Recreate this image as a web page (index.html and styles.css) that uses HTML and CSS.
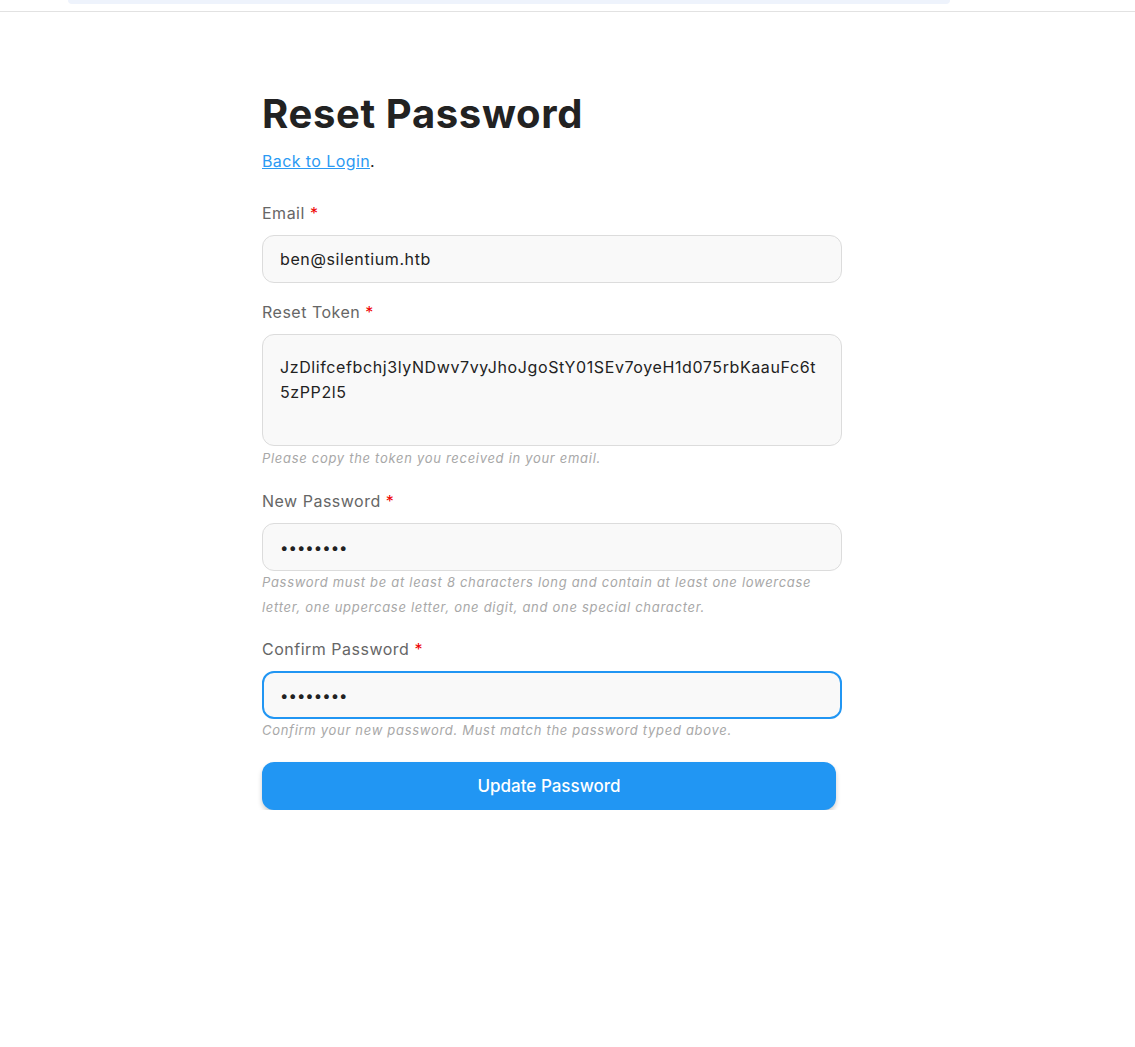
FILE: index.html
```html
<!DOCTYPE html>
<html lang="en">
<head>
<meta charset="utf-8">
<title>Reset Password</title>
<link rel="stylesheet" href="styles.css">
</head>
<body>
<header class="topbar">
  <div class="topbar-pill"></div>
</header>
<main class="page">
  <section class="card">
    <h1 class="title">Reset Password</h1>
    <p class="back"><a href="#" class="back-link">Back to Login</a>.</p>
    <form class="form">
      <div class="field">
        <label class="label">Email <span class="req">*</span></label>
        <input class="input" type="text" value="ben@silentium.htb">
      </div>
      <div class="field">
        <label class="label">Reset Token <span class="req">*</span></label>
        <textarea class="input textarea">JzDlifcefbchj3lyNDwv7vyJhoJgoStY01SEv7oyeH1d075rbKaauFc6t5zPP2l5</textarea>
        <p class="help help-token">Please copy the token you received in your email.</p>
      </div>
      <div class="field">
        <label class="label">New Password <span class="req">*</span></label>
        <input class="input" type="password" value="password">
        <p class="help">Password must be at least 8 characters long and contain at least one lowercase letter, one uppercase letter, one digit, and one special character.</p>
      </div>
      <div class="field">
        <label class="label">Confirm Password <span class="req">*</span></label>
        <input class="input input-focus" type="password" value="password">
        <p class="help">Confirm your new password. Must match the password typed above.</p>
      </div>
      <button type="button" class="btn">Update Password</button>
    </form>
  </section>
</main>
</body>
</html>
```
FILE: styles.css
```css
* { box-sizing: border-box; }
html, body { margin: 0; padding: 0; background: #fff; }
body {
  font-family: Inter, "Noto Sans", sans-serif;
  color: #222;
}
.topbar {
  height: 12px;
  border-bottom: 1px solid #e2e2e2;
  padding-left: 68px;
}
.topbar-pill {
  width: 882px;
  height: 4px;
  background: #eef3fc;
  border-radius: 0 0 8px 8px;
}
.page {
  padding: 0 0 0 262px;
}
.card {
  width: 580px;
}
.title {
  font-size: 40px;
  font-weight: 700;
  line-height: 48px;
  margin: 78px 0 0;
  color: #222;
  letter-spacing: 0.65px;
}
.back {
  margin: 12px 0 0;
  font-size: 16px;
  line-height: 22px;
  color: #222;
  letter-spacing: 0.4px;
}
.back-link {
  color: #2b9af3;
  text-decoration: underline;
}
.form {
  display: flex;
  flex-direction: column;
  margin-top: 30px;
}
.field {
  display: flex;
  flex-direction: column;
}
.label {
  font-size: 16px;
  line-height: 22px;
  color: #666;
  margin-bottom: 11px;
  letter-spacing: 0.5px;
}
.req { color: #e00; }
.input {
  width: 580px;
  height: 48px;
  border: 1px solid #dcdcdc;
  border-radius: 12px;
  background: #f9f9f9;
  font-family: Inter, "Noto Sans", sans-serif;
  font-size: 16px;
  color: #222;
  padding: 0 17px;
  outline: none;
  margin-bottom: 18px;
  letter-spacing: 0.6px;
}
.input[type="password"] {
  letter-spacing: 0;
  font-size: 15px;
}
.textarea {
  height: 112px;
  padding: 20px 17px;
  line-height: 25px;
  resize: none;
  margin-bottom: 0;
}
.input-focus {
  border: 2px solid #2196f3;
  padding: 0 16px;
}
.help {
  font-size: 13px;
  font-style: italic;
  line-height: 25px;
  color: #a8a8a8;
  margin: -19px 0 18px;
  letter-spacing: 0.7px;
}
.help-token {
  margin: 0 0 19px;
}
.btn {
  width: 574px;
  height: 48px;
  border: none;
  border-radius: 12px;
  background: #2196f3;
  color: #fff;
  font-family: Inter, "Noto Sans", sans-serif;
  font-size: 17px;
  font-weight: 500;
  box-shadow: 0 3px 5px rgba(0,0,0,0.2);
  margin-top: 1px;
}
```
